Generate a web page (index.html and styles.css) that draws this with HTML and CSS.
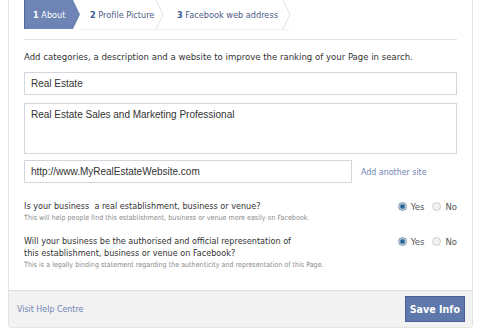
FILE: index.html
```html
<!DOCTYPE html>
<html>
<head>
    <title>Page Info</title>
    <link rel="stylesheet" href="styles.css">
</head>
<body>
    <div class="card">
        <div class="steps">
            <svg class="steps-bg" width="280" height="30" viewBox="0 0 280 30">
                <polygon points="0,0 49,0 56,14.5 49,29 0,29" fill="#6d84b4"/>
                <line x1="0.5" y1="0" x2="0.5" y2="29" stroke="#4e66a0"/>
                <polyline points="132,0 139,14.5 132,29" fill="none" stroke="#e2e2e2"/>
                <polyline points="259,0 266,14.5 259,29" fill="none" stroke="#e2e2e2"/>
                <line x1="56" y1="29.5" x2="266" y2="29.5" stroke="#f0f0f0"/>
            </svg>
            <div class="step step-active"><b>1</b> About</div>
            <div class="step step-two"><b>2</b> Profile Picture</div>
            <div class="step step-three"><b>3</b> Facebook web address</div>
        </div>
        <div class="content">
            <div class="divider"></div>
            <div class="intro">Add categories, a description and a website to improve the ranking of your Page in search.</div>
            <input type="text" class="field" value="Real Estate">
            <textarea class="field field-area">Real Estate Sales and Marketing Professional</textarea>
            <div class="site-row">
                <input type="text" class="field field-site" value="http://www.MyRealEstateWebsite.com">
                <a class="link" href="#">Add another site</a>
            </div>
            <div class="question">
                <div class="question-text">
                    <div class="question-title">Is your business &nbsp;a real establishment, business or venue?</div>
                    <div class="question-note">This will help people find this establishment, business or venue more easily on Facebook.</div>
                </div>
                <div class="choices">
                    <span class="radio radio-on"></span><span class="choice">Yes</span>
                    <span class="radio"></span><span class="choice">No</span>
                </div>
            </div>
            <div class="question question-two">
                <div class="question-text">
                    <div class="question-title">Will your business be the authorised and official representation of<br>this establishment, business or venue on Facebook?</div>
                    <div class="question-note">This is a legally binding statement regarding the authenticity and representation of this Page.</div>
                </div>
                <div class="choices">
                    <span class="radio radio-on"></span><span class="choice">Yes</span>
                    <span class="radio"></span><span class="choice">No</span>
                </div>
            </div>
        </div>
        <div class="footer">
            <a class="link" href="#">Visit Help Centre</a>
            <button type="button" class="save">Save Info</button>
        </div>
    </div>
</body>
</html>
```

FILE: styles.css
```css
body {
    margin: 0;
    background: #fff;
    font-family: "DejaVu Sans Condensed", "DejaVu Sans", sans-serif;
    color: #333;
}
.card {
    margin-left: 8px;
    width: 465px;
    box-sizing: border-box;
    border: 1px solid #e4e4e4;
    border-top: 0;
    border-radius: 0 0 4px 4px;
    overflow: hidden;
}
.steps {
    position: relative;
    display: flex;
    height: 29px;
    margin-left: 15px;
    align-items: center;
    font-size: 9.1px;
    color: #4d5b85;
}
.steps-bg {
    position: absolute;
    left: 0;
    top: 0;
}
.step {
    position: relative;
}
.step b {
    color: #3b5998;
}
.step-active {
    color: #fff;
    padding-left: 9px;
    width: 57px;
}
.step-active b {
    color: #fff;
}
.step-two {
    width: 87px;
}
.content {
    padding: 0 15px;
}
.divider {
    margin-top: 10px;
    border-top: 1px solid #e2e2e2;
}
.intro {
    margin-top: 11px;
    font-size: 9.5px;
    line-height: 12px;
}
.field {
    display: block;
    width: 100%;
    box-sizing: border-box;
    height: 23px;
    margin-top: 9px;
    padding: 0 6px;
    border: 1px solid #d4d6dc;
    font-family: "Liberation Sans", Arial, sans-serif;
    font-size: 10px;
    color: #333;
    outline: 0;
}
.field-area {
    height: 51px;
    margin-top: 8px;
    padding-top: 5px;
    resize: none;
}
.site-row {
    display: flex;
    align-items: center;
    margin-top: 6px;
}
.field-site {
    margin-top: 0;
    width: 328px;
    margin-right: 9px;
}
.link {
    color: #6d84b4;
    text-decoration: none;
    font-size: 8.8px;
}
.question {
    display: flex;
    justify-content: space-between;
    margin-top: 17px;
}
.question-two {
    margin-top: 12px;
}
.question-title {
    font-size: 9px;
    line-height: 12px;
}
.question-note {
    font-size: 7.1px;
    line-height: 11px;
    color: #8a8a8a;
}
.choices {
    display: flex;
    align-items: center;
    height: 12px;
    font-size: 9.5px;
    color: #555;
}
.choice {
    margin-left: 4px;
    margin-right: 8px;
}
.choice:last-child {
    margin-right: 0;
}
.radio {
    width: 7px;
    height: 7px;
    border-radius: 50%;
    border: 1px solid #cfcfcf;
    background: #f2f2f2;
}
.radio-on {
    border-color: #8c9aab;
    background: radial-gradient(circle, #1f5d8c 0, #2b6c9c 35%, #b9cbe0 60%, #e8eef5 100%);
}
.footer {
    display: flex;
    justify-content: space-between;
    align-items: center;
    margin-top: 20px;
    height: 36px;
    padding: 0 7px 0 8px;
    border-top: 1px solid #dcdcdc;
    background: #f2f2f2;
}
.save {
    height: 26px;
    padding: 0 4px;
    border: 1px solid #4a5f95;
    background: #5f78ab;
    color: #fff;
    font-family: "DejaVu Sans Condensed", "DejaVu Sans", sans-serif;
    font-weight: bold;
    font-size: 10.6px;
}
```
